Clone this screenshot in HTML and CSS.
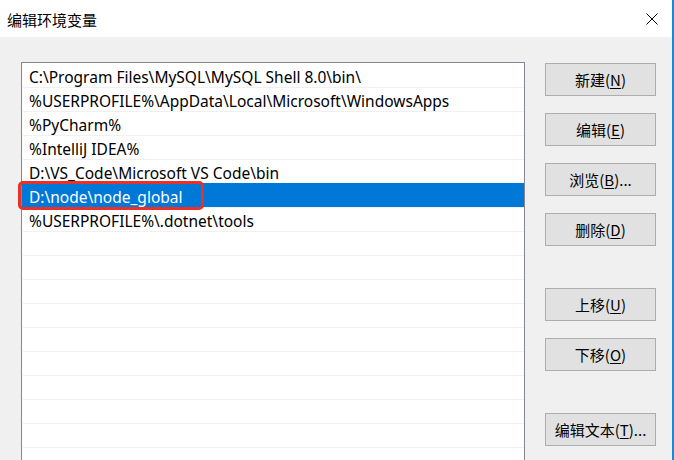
FILE: index.html
```html
<!DOCTYPE html>
<html lang="zh-CN">
<head>
<meta charset="utf-8">
<title>编辑环境变量</title>
<link rel="stylesheet" href="styles.css">
</head>
<body>
<div class="window">
  <div class="titlebar">
    <span class="title">编辑环境变量</span>
    <svg class="close" width="12" height="12" viewBox="0 0 12 12"><path d="M0.5 0.5 L11.5 11.5 M11.5 0.5 L0.5 11.5" stroke="#000" stroke-width="1" fill="none"/></svg>
  </div>
  <div class="content">
    <div class="list-wrap">
      <div class="list">
        <div class="row">C:\Program Files\MySQL\MySQL Shell 8.0\bin\</div>
        <div class="row">%USERPROFILE%\AppData\Local\Microsoft\WindowsApps</div>
        <div class="row">%PyCharm%</div>
        <div class="row">%IntelliJ IDEA%</div>
        <div class="row">D:\VS_Code\Microsoft VS Code\bin</div>
        <div class="row selected">D:\node\node_global</div>
        <div class="row">%USERPROFILE%\.dotnet\tools</div>
        <div class="row"></div>
        <div class="row"></div>
        <div class="row"></div>
        <div class="row"></div>
        <div class="row"></div>
        <div class="row"></div>
        <div class="row"></div>
        <div class="row"></div>
        <div class="row"></div>
        <div class="row"></div>
      </div>
      <div class="highlight"></div>
    </div>
    <div class="buttons">
      <div class="group">
        <button class="btn">新建(<u>N</u>)</button>
        <button class="btn">编辑(<u>E</u>)</button>
        <button class="btn">浏览(<u>B</u>)...</button>
        <button class="btn">删除(<u>D</u>)</button>
      </div>
      <div class="group">
        <button class="btn">上移(<u>U</u>)</button>
        <button class="btn">下移(<u>O</u>)</button>
      </div>
      <div class="group">
        <button class="btn">编辑文本(<u>T</u>)...</button>
      </div>
    </div>
  </div>
</div>
</body>
</html>
```
FILE: styles.css
```css
* { box-sizing: border-box; }
html, body {
  margin: 0;
  padding: 0;
  width: 674px;
  height: 460px;
  overflow: hidden;
}
body {
  font-family: "Noto Sans", "Noto Sans CJK SC", sans-serif;
  font-size: 15px;
  color: #000;
  background: #f0f0f0;
}
.window {
  width: 674px;
  height: 460px;
  border-right: 2px solid #1c87d8;
  background: #f0f0f0;
  display: flex;
  flex-direction: column;
  overflow: hidden;
}
.titlebar {
  height: 37px;
  flex: none;
  background: #fff;
  display: flex;
  align-items: center;
  justify-content: space-between;
  padding: 0 14px 0 7px;
}
.title {
  font-family: "Noto Sans CJK SC", sans-serif;
  font-size: 15px;
  line-height: 15px;
  margin-top: 1px;
}
.close { display: block; }
.content {
  display: flex;
  padding: 25px 0 0 21px;
  flex: 1;
  min-height: 0;
}
.list-wrap {
  position: relative;
  width: 504px;
  flex: none;
}
.list {
  width: 504px;
  height: 420px;
  background: #fff;
  border: 1px solid #828790;
  border-bottom: none;
  overflow: hidden;
}
.row {
  height: 24px;
  line-height: 20px;
  padding: 4px 0 0 7px;
  white-space: nowrap;
  font-family: "Noto Sans", "Noto Sans CJK SC", sans-serif;
  font-size: 15.5px;
}
.row + .row {
  border-top: 1px solid #f0f0f0;
  margin-left: 1px;
  padding: 3px 0 0 6px;
}
.row.selected {
  background: #0078d7;
  color: #fff;
  border-top-color: #0078d7;
  margin-left: 0;
  padding-left: 7px;
}
.highlight {
  position: absolute;
  left: -3px;
  top: 119px;
  width: 186px;
  height: 29px;
  border: 3px solid #ec2f27;
  border-radius: 5px;
}
.buttons {
  margin-left: 20px;
  width: 111px;
  display: flex;
  flex-direction: column;
  gap: 42px;
  padding-top: 1px;
}
.group {
  display: flex;
  flex-direction: column;
  gap: 17px;
}
.btn {
  height: 33px;
  width: 111px;
  background: #e1e1e1;
  border: 1px solid #adadad;
  border-radius: 0;
  padding: 0;
  font-family: "Noto Sans CJK SC", sans-serif;
  font-size: 15px;
  color: #000;
  line-height: 31px;
}
.btn u { text-underline-offset: 2px; }
```
